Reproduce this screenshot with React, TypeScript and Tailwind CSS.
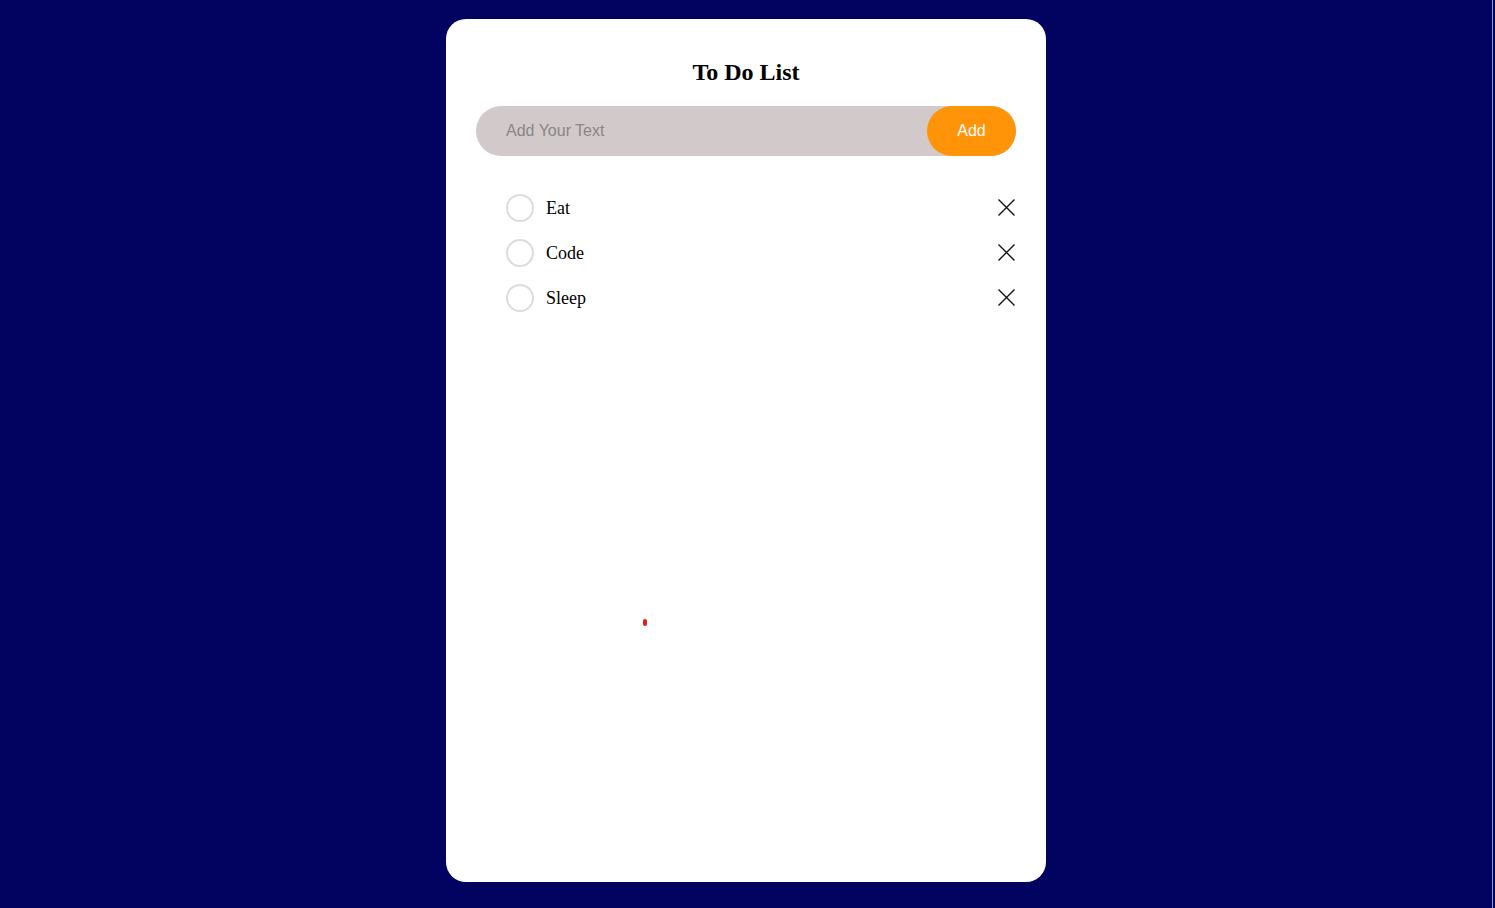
import { useState } from 'react';

type Task = { id: number; text: string; done: boolean };

const initialTasks: Task[] = [
  { id: 1, text: 'Eat', done: false },
  { id: 2, text: 'Code', done: false },
  { id: 3, text: 'Sleep', done: false },
];

function CloseIcon() {
  return (
    <svg width="17" height="17" viewBox="0 0 17 17" fill="none" stroke="#111" strokeWidth="1.4">
      <path d="M0.5 0.5L16.5 16.5M16.5 0.5L0.5 16.5" />
    </svg>
  );
}

export default function App() {
  const [tasks, setTasks] = useState<Task[]>(initialTasks);
  const [draft, setDraft] = useState('');

  const addTask = () => {
    if (!draft.trim()) {
      return;
    }
    setTasks((prev) => [...prev, { id: Date.now(), text: draft.trim(), done: false }]);
    setDraft('');
  };

  return (
    <div className="flex min-h-screen bg-[#020260]">
      <main className="flex flex-1 justify-center pt-[19px] pb-[26px]">
        <section className="relative flex h-[863px] w-[600px] flex-col rounded-[20px] bg-white px-[30px] pt-[38px]">
          <h2 className="m-0 text-center font-['Liberation_Serif',serif] text-[24px] leading-[30px] font-bold text-black">
            To Do List
          </h2>

          <div className="mt-[19px] flex h-[50px] items-center rounded-full bg-[#d2caca]">
            <input
              value={draft}
              onChange={(event) => setDraft(event.target.value)}
              placeholder="Add Your Text"
              className="h-full flex-1 bg-transparent pl-[30px] font-['Liberation_Sans',sans-serif] text-[16px] text-[#333] outline-none placeholder:text-[#8b8585]"
            />
            <button
              onClick={addTask}
              className="h-full w-[89px] rounded-full bg-[#ff9408] font-['Liberation_Sans',sans-serif] text-[16px] text-white"
            >
              Add
            </button>
          </div>

          <ul className="mt-[29px] flex flex-col pl-[30px]">
            {tasks.map((task) => (
              <li key={task.id} className="flex h-[45px] items-center">
                <button
                  onClick={() =>
                    setTasks((prev) => prev.map((t) => (t.id === task.id ? { ...t, done: !t.done } : t)))
                  }
                  className="size-[28px] shrink-0 rounded-full border-2 border-[#dcdcdc]"
                />
                <span className="ml-[12px] flex-1 pt-[2px] font-['Liberation_Serif',serif] text-[18px] text-black">
                  {task.text}
                </span>
                <button
                  onClick={() => setTasks((prev) => prev.filter((t) => t.id !== task.id))}
                  className="mr-px flex size-[17px] items-center justify-center"
                >
                  <CloseIcon />
                </button>
              </li>
            ))}
          </ul>

          <span className="absolute top-[600px] left-[197px] h-[7px] w-[4px] rounded-full bg-[#e0201e]" />
        </section>
      </main>
      <div className="w-px bg-[#9a9ac0]" />
      <div className="w-[2px]" />
    </div>
  );
}
